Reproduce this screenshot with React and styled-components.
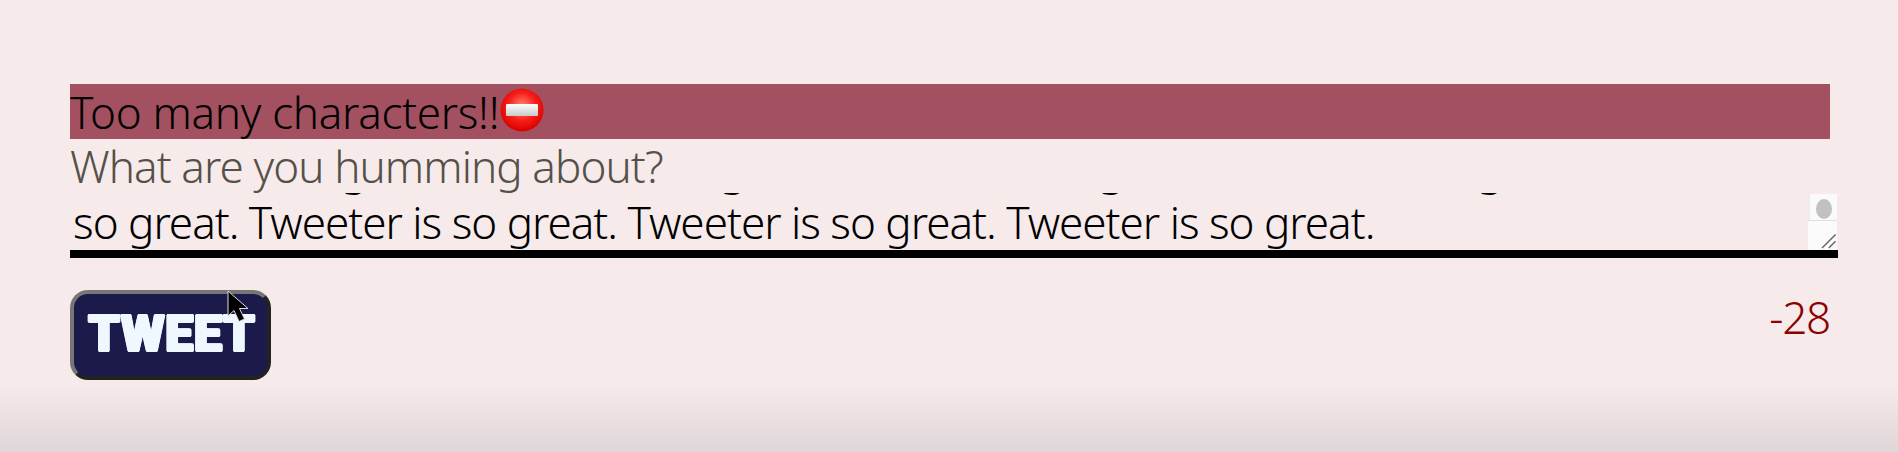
import React, { useEffect, useRef } from 'react'
import styled, { createGlobalStyle } from 'styled-components'

const Global = createGlobalStyle`
  html, body { margin: 0; padding: 0; }
  body {
    height: 452px;
    overflow: hidden;
    background: linear-gradient(to bottom, #f6eaeb 0, #f6eaeb 384px, #dfd6d9 452px);
    font-family: "Noto Sans", "Open Sans", sans-serif;
  }
`

const Page = styled.main`
  display: flex;
  flex-direction: column;
  padding: 84px 60px 0 70px;
`

const ErrorBar = styled.div`
  display: flex;
  align-items: center;
  width: 1760px;
  height: 55px;
  background: #a35060;
  color: #000;
  font-size: 44px;
  font-weight: 300;
  letter-spacing: -0.3px;
`

const Label = styled.label`
  display: block;
  height: 54px;
  line-height: 54px;
  color: #545149;
  font-size: 44px;
  font-weight: 300;
  letter-spacing: -0.9px;
`

const InputBox = styled.div`
  position: relative;
  height: 65px;
`

const TweetInput = styled.textarea`
  display: block;
  box-sizing: border-box;
  width: 100%;
  height: 65px;
  margin: 0;
  padding: 0 3px;
  border: none;
  border-bottom: 8px solid #000;
  border-radius: 0;
  outline: none;
  resize: none;
  overflow: hidden;
  background: transparent;
  color: #000;
  font-family: inherit;
  font-size: 44px;
  font-weight: 300;
  letter-spacing: -1px;
  line-height: 54px;
  white-space: pre;
`

const ScrollTrack = styled.div`
  position: absolute;
  top: 1px;
  right: 1px;
  box-sizing: border-box;
  width: 29px;
  height: 26px;
  padding: 5px 5px 1px 6px;
  background: #fafafa;
  border-left: 2px solid #ececec;
`

const ScrollThumb = styled.div`
  width: 16px;
  height: 20px;
  border-radius: 50%;
  background: #c1c1c1;
`

const Grip = styled.svg`
  position: absolute;
  top: 27px;
  right: 1px;
  width: 29px;
  height: 30px;
  background: #fafafa;
  border-top: 1px solid #e0e0e0;
  box-sizing: border-box;
`

const Footer = styled.div`
  display: flex;
  justify-content: space-between;
  align-items: flex-start;
  margin-top: 32px;
  width: 1760px;
`

const TweetButton = styled.button`
  position: relative;
  box-sizing: border-box;
  width: 201px;
  height: 90px;
  padding: 0 0 2px 3px;
  border: 4px solid;
  border-color: #767676 #222 #222 #767676;
  border-radius: 18px;
  background: #1b1a4b;
  color: aliceblue;
  font-family: Roboto, sans-serif;
  font-size: 50px;
  font-weight: 900;
  line-height: 1;
  letter-spacing: 0.8px;
  text-shadow:
    1.5px 0 0 aliceblue, -1.5px 0 0 aliceblue, 0 1.2px 0 aliceblue, 0 -1.2px 0 aliceblue,
    1px 0.9px 0 aliceblue, -1px 0.9px 0 aliceblue, 1px -0.9px 0 aliceblue, -1px -0.9px 0 aliceblue;
`

const Pointer = styled.svg`
  position: absolute;
  left: 153px;
  top: -4px;
  width: 24px;
  height: 36px;
`

const Counter = styled.output`
  color: #8b0000;
  font-size: 44px;
  font-weight: 300;
  letter-spacing: -1.2px;
  line-height: 54px;
`

const EmojiMark = styled.svg`
  margin-bottom: 3px;
`

const NoEntry = () => (
  <EmojiMark width="46" height="46" viewBox="0 0 46 46">
    <defs>
      <radialGradient id="red" cx="50%" cy="42%" r="58%">
        <stop offset="0" stopColor="#ff8a7a" />
        <stop offset="0.55" stopColor="#f8201a" />
        <stop offset="1" stopColor="#d80000" />
      </radialGradient>
      <linearGradient id="bar" x1="0" y1="0" x2="0" y2="1">
        <stop offset="0" stopColor="#ffffff" />
        <stop offset="1" stopColor="#c9c9c9" />
      </linearGradient>
    </defs>
    <circle cx="23" cy="23" r="21.5" fill="url(#red)" />
    <rect x="7" y="17" width="32" height="12" rx="1" fill="url(#bar)" />
  </EmojiMark>
)

const last = 'so great. Tweeter is so great. Tweeter is so great. Tweeter is so great.'
const prev = ' Tweeter is so great. Tweeter is so great. Tweeter is so great. Tweeter is so great.'
const text = `Tweeter is so great.\n${prev}\n${last}`

export default function App() {
  const input = useRef(null)

  useEffect(() => {
    // stop 2px short of the end, so the last line sits on the border
    const el = input.current
    el.scrollTop = el.scrollHeight - el.clientHeight - 2
  }, [])

  return (
    <Page>
      <Global />
      <ErrorBar>
        Too many characters!!
        <NoEntry />
      </ErrorBar>
      <Label htmlFor="tweet">What are you humming about?</Label>
      <InputBox>
        <TweetInput id="tweet" ref={input} defaultValue={text} />
        <ScrollTrack>
          <ScrollThumb />
        </ScrollTrack>
        <Grip viewBox="0 0 29 30">
          <path d="M14 28 L28 14 M21 28 L28 21" stroke="#666" strokeWidth="1.5" fill="none" />
        </Grip>
      </InputBox>
      <Footer>
        <TweetButton type="submit">
          TWEET
          <Pointer viewBox="0 0 24 36">
            <path d="M1 1 L1 26 L7 20.5 L12 31.5 L17.5 29 L12.5 18.5 L21 18.5 Z" fill="#000" stroke="#ddd" strokeWidth="1" />
          </Pointer>
        </TweetButton>
        <Counter>-28</Counter>
      </Footer>
    </Page>
  )
}
